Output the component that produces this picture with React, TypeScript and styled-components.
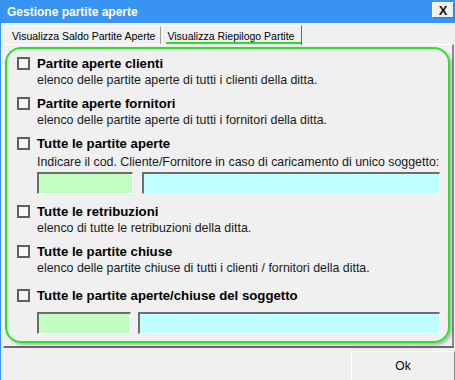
import React from "react";
import styled, { createGlobalStyle } from "styled-components";

const GlobalStyle = createGlobalStyle`
  html, body {
    margin: 0;
    padding: 0;
    background: #f0f0f0;
  }
  body {
    font-family: "Liberation Sans", Arial, sans-serif;
  }
`;

type OptionItem = {
  title: string;
  desc?: string;
  inputs?: boolean;
};

const OPTIONS: OptionItem[] = [
  { title: "Partite aperte clienti", desc: "elenco delle partite aperte di tutti i clienti della ditta." },
  { title: "Partite aperte fornitori", desc: "elenco delle partite aperte di tutti i fornitori della ditta." },
  {
    title: "Tutte le partite aperte",
    desc: "Indicare il cod. Cliente/Fornitore in caso di caricamento di unico soggetto:",
    inputs: true,
  },
  { title: "Tutte le retribuzioni", desc: "elenco di tutte le retribuzioni della ditta." },
  { title: "Tutte le partite chiuse", desc: "elenco delle partite chiuse di tutti i clienti / fornitori della ditta." },
  { title: "Tutte le partite aperte/chiuse del soggetto", inputs: true },
];

const App: React.FC = () => {
  return (
    <>
      <GlobalStyle />
      <Window>
        <TitleBar>
          <Caption>Gestione partite aperte</Caption>
          <CloseButton>X</CloseButton>
        </TitleBar>

        <TabStrip>
          <Tab>Visualizza Saldo Partite Aperte</Tab>
          <Tab $active>Visualizza Riepilogo Partite</Tab>
        </TabStrip>

        <TabPage>
          <Frame>
            {OPTIONS.map((item, index) => (
              <Option key={`opt_${index}`} $last={index === OPTIONS.length - 1}>
                <OptionHead>
                  <CheckBox />
                  <OptionTitle>{item.title}</OptionTitle>
                </OptionHead>
                {item.desc && <OptionDesc $tall={!!item.inputs}>{item.desc}</OptionDesc>}
                {item.inputs && (
                  <InputRow $last={index === OPTIONS.length - 1}>
                    <CodeInput $tone="green" $w={index === 2 ? 96 : 94} />
                    <CodeInput $tone="cyan" />
                  </InputRow>
                )}
              </Option>
            ))}
          </Frame>
        </TabPage>

        <Footer>
          <OkButton>Ok</OkButton>
        </Footer>
      </Window>
    </>
  );
};

export default App;

const Window = styled.div`
  width: 455px;
  height: 380px;
  display: flex;
  flex-direction: column;
  background: #f0f0f0;
  overflow: hidden;
  box-sizing: border-box;
  border-left: 1px solid #3993f3;
`;

const TitleBar = styled.div`
  height: 23px;
  flex: none;
  background: #3993f3;
  display: flex;
  align-items: center;
  justify-content: space-between;
  padding: 0 1px 0 7px;
  margin-left: -1px;
`;

const Caption = styled.span`
  color: #fff;
  font-weight: bold;
  font-size: 12px;
`;

const CloseButton = styled.div`
  width: 22px;
  height: 16px;
  margin-top: -3px;
  box-sizing: border-box;
  background: #f0f0f0;
  border-top: 1px solid #fff;
  border-left: 1px solid #fff;
  border-right: 1px solid #707070;
  border-bottom: 1px solid #707070;
  display: flex;
  align-items: center;
  justify-content: center;
  font-weight: bold;
  font-size: 13px;
  color: #111;
`;

const TabStrip = styled.div`
  height: 21px;
  flex: none;
  display: flex;
  align-items: flex-end;
  padding-left: 2px;
  position: relative;
  z-index: 1;
`;

const Tab = styled.div<{ $active?: boolean }>`
  box-sizing: border-box;
  height: ${(p) => (p.$active ? 20 : 18)}px;
  padding: ${(p) => (p.$active ? "0 7px 0 4px" : "0 5px 0 8px")};
  display: flex;
  align-items: center;
  font-size: 10.5px;
  color: #000;
  white-space: nowrap;
  border-top: 1px solid #fff;
  border-left: 1px solid #fff;
  border-right: 1px solid ${(p) => (p.$active ? "#6a6a6a" : "#a0a0a0")};
  ${(p) =>
    p.$active
      ? `
    margin-bottom: -1px;
    margin-left: 1px;
    background: linear-gradient(#22e022, #22e022) no-repeat left 3px bottom 1px / calc(100% - 3px) 2px, #f0f0f0;
  `
      : ""}
`;

const TabPage = styled.div`
  height: 304px;
  flex: none;
  box-sizing: border-box;
  border-top: 1px solid #fff;
  border-left: 1px solid #fff;
  border-right: 2px solid #8a8a8a;
  border-bottom: 2px solid #6a6a6a;
  margin: 0 1px 0 2px;
  padding: 2px 2px 0 1px;
`;

const Frame = styled.div`
  box-sizing: border-box;
  height: 296px;
  border: 2px solid #22e622;
  border-radius: 16px;
  padding: 6px 8px 0 10px;
  box-shadow: 2px 2px 3px rgba(0, 0, 0, 0.25);
  display: flex;
  flex-direction: column;
`;

const Option = styled.div<{ $last?: boolean }>`
  display: flex;
  flex-direction: column;
  margin-bottom: 6px;
  ${(p) => p.$last && "margin-top: 4px;"}
`;

const OptionHead = styled.div`
  display: flex;
  align-items: center;
  height: 16px;
`;

const CheckBox = styled.span`
  width: 13px;
  height: 13px;
  box-sizing: border-box;
  border: 2px solid #606060;
  background: #f7f7f7;
  flex: none;
  margin-right: 7px;
`;

const OptionTitle = styled.span`
  font-weight: bold;
  font-size: 13.2px;
  color: #000;
  white-space: nowrap;
`;

const OptionDesc = styled.div<{ $tall?: boolean }>`
  padding-left: 20px;
  height: 18px;
  line-height: 18px;
  font-size: 12.4px;
  color: #1a1a1a;
  white-space: nowrap;
  ${(p) => p.$tall && "margin-top: 2px;"}
`;

const InputRow = styled.div<{ $last?: boolean }>`
  display: flex;
  gap: ${(p) => (p.$last ? 7 : 9)}px;
  padding-left: 20px;
  margin-top: ${(p) => (p.$last ? 9 : 1)}px;
  margin-bottom: 3px;
`;

const CodeInput = styled.div<{ $tone: "green" | "cyan"; $w?: number }>`
  box-sizing: border-box;
  height: 22px;
  width: ${(p) => (p.$w ? `${p.$w}px` : "auto")};
  flex: ${(p) => (p.$w ? "none" : "1")};
  background: ${(p) => (p.$tone === "green" ? "#c0ffc0" : "#c0ffff")};
  border-top: 2px solid #6e6e6e;
  border-left: 2px solid #6e6e6e;
  border-right: 1px solid #fff;
  border-bottom: 1px solid #fff;
`;

const Footer = styled.div`
  flex: 1;
  display: flex;
  justify-content: flex-end;
  align-items: flex-start;
  padding-top: 3px;
`;

const OkButton = styled.div`
  width: 104px;
  height: 30px;
  box-sizing: border-box;
  border-top: 1px solid #fff;
  border-left: 1px solid #fff;
  border-right: 1px solid #8a8a8a;
  border-bottom: 1px solid #8a8a8a;
  display: flex;
  align-items: center;
  justify-content: center;
  font-size: 12px;
  color: #000;
`;
